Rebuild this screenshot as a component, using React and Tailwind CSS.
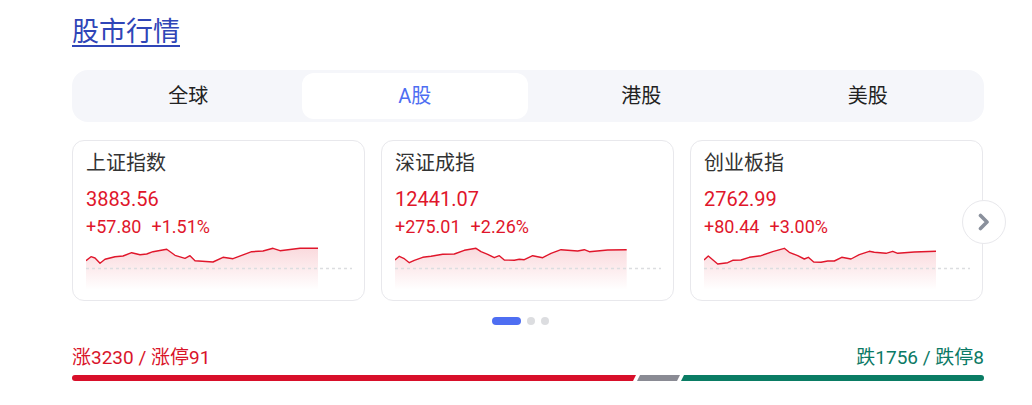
import { useState } from 'react';

const font = { fontFamily: 'Roboto, "Noto Sans CJK SC", sans-serif' };

const tabs = ['全球', 'A股', '港股', '美股'];

const indices = [
  {
    name: '上证指数',
    price: '3883.56',
    change: '+57.80',
    pct: '+1.51%',
    pts: [[0,15.7],[5,11.7],[9,13],[14,18.3],[19,14.3],[29,11.7],[37,11],[45.7,7.7],[54,9.7],[60.7,9],[67,6.7],[80.7,4.3],[89,10.3],[99,13.3],[104,10.7],[109,15.7],[127,17],[137,12.3],[147,13.7],[155.7,10.3],[165.7,6.7],[177,6],[187,3.3],[194,5.7],[214,3.3],[232,3.3]],
  },
  {
    name: '深证成指',
    price: '12441.07',
    change: '+275.01',
    pct: '+2.26%',
    pts: [[0,15],[4.3,11.3],[8.7,13.3],[14.3,17.7],[19.3,15.3],[27.7,12.3],[36,11.3],[47.7,9.3],[59.3,9],[69.3,5.3],[81,3.3],[86,6.7],[92.7,9.3],[99.3,12.7],[104.3,10.7],[109.3,15],[119.3,15.3],[124.3,14.3],[129.3,14.7],[137.7,10.7],[147.7,12.7],[156,8.3],[166,4.7],[182.7,6],[189.3,4.7],[194.3,6.7],[212.7,5],[231.7,4.7]],
  },
  {
    name: '创业板指',
    price: '2762.99',
    change: '+80.44',
    pct: '+3.00%',
    pts: [[0,15],[4.3,11],[13.7,19],[23.7,17.7],[28.7,15.3],[37,15],[45.3,12.3],[57,10.7],[68.7,6.7],[80.3,3.3],[85.3,7.3],[93.7,10.7],[100.3,14],[104.3,12.3],[109.7,17],[117,17.3],[123.7,16],[130.3,16],[137.7,12.3],[147,14],[155.3,9.7],[165.3,6.3],[170.3,7.3],[182,8.3],[188.7,6.3],[193.7,8.3],[210.3,7],[232,6.3]],
  },
];

function Sparkline({ pts, id }) {
  const line = pts.map((p, i) => `${i ? 'L' : 'M'}${p[0]},${p[1]}`).join(' ');
  const last = pts[pts.length - 1];
  const area = `${line} L${last[0]},45 L0,45 Z`;
  return (
    <svg width="266" height="45" viewBox="0 0 266 45" className="block">
      <defs>
        <linearGradient id={id} x1="0" y1="0" x2="0" y2="1">
          <stop offset="0" stopColor="#e0162b" stopOpacity="0.16" />
          <stop offset="1" stopColor="#e0162b" stopOpacity="0" />
        </linearGradient>
      </defs>
      <path d={area} fill={`url(#${id})`} />
      <line x1="0" y1="23.5" x2="266" y2="23.5" stroke="#dcdde0" strokeWidth="1.5" strokeDasharray="3 3" />
      <path d={line} fill="none" stroke="#e0162b" strokeWidth="1.4" strokeLinejoin="round" />
    </svg>
  );
}

export default function App() {
  const [active, setActive] = useState(1);

  return (
    <div className="bg-white min-h-screen" style={font}>
      <div className="ml-[72px] w-[912px] pt-[14px]">
        <a href="#" className="block w-fit text-[27px] leading-[36px] text-[#2f45b7] underline decoration-[1.5px] underline-offset-[4px]">
          股市行情
        </a>

        {/* tabs */}
        <div className="mt-[20px] h-[52px] p-[3px] rounded-[16px] bg-[#f5f6fa] flex">
          {tabs.map((t, i) => (
            <button
              key={t}
              onClick={() => setActive(i)}
              className={
                i === active
                  ? 'flex-1 rounded-[12px] bg-white text-[20px] text-[#4e6ef2]'
                  : 'flex-1 rounded-[12px] text-[20px] text-[#222]'
              }
            >
              {t}
            </button>
          ))}
        </div>

        {/* index cards */}
        <div className="relative mt-[18px] flex gap-[16px]">
          {indices.map((item, i) => (
            <div key={item.name} className="w-[293px] h-[161px] rounded-[12px] border border-[#e8e8ec] px-[13px] pt-[8px]">
              <div className="text-[20px] leading-[28px] text-[#333]">{item.name}</div>
              <div className="mt-[8px] text-[20px] leading-[28px] text-[#e0162b]">{item.price}</div>
              <div className="mt-[2px] text-[18px] leading-[24px] text-[#e0162b] flex gap-[10px]">
                <span>{item.change}</span>
                <span>{item.pct}</span>
              </div>
              <div className="mt-[6px]">
                <Sparkline pts={item.pts} id={`grad${i}`} />
              </div>
            </div>
          ))}
          <button className="absolute right-[-22px] top-[60px] w-[44px] h-[44px] rounded-full border border-[#e8e8ec] bg-white flex items-center justify-center">
            <svg width="12" height="18" viewBox="0 0 12 18">
              <polyline points="2.5,2.5 9,9 2.5,15.5" fill="none" stroke="#8a909c" strokeWidth="3.6" strokeLinecap="round" strokeLinejoin="round" />
            </svg>
          </button>
        </div>

        {/* pager dots */}
        <div className="mt-[16px] h-[8px] flex justify-center gap-[6px] pr-[16px]">
          <span className="w-[29px] h-[8px] rounded-full bg-[#4e6ef2]" />
          <span className="w-[8px] h-[8px] rounded-full bg-[#dcdde0]" />
          <span className="w-[8px] h-[8px] rounded-full bg-[#dcdde0]" />
        </div>

        {/* advance / decline */}
        <div className="mt-[21px] flex justify-between text-[19px] leading-[24px]">
          <span className="text-[#d9142a]">涨3230 / 涨停91</span>
          <span className="text-[#0b7a65]">跌1756 / 跌停8</span>
        </div>
        <div className="mt-[5px] h-[6px] flex">
          <div className="w-[564px] bg-[#d80f2a] rounded-l-full [clip-path:polygon(0_0,100%_0,calc(100%-3px)_100%,0_100%)]" />
          <div className="ml-[1px] w-[43px] bg-[#8a8b94] [clip-path:polygon(3px_0,100%_0,calc(100%-3px)_100%,0_100%)]" />
          <div className="ml-[1px] flex-1 bg-[#0a7c64] rounded-r-full [clip-path:polygon(3px_0,100%_0,100%_100%,0_100%)]" />
        </div>

        {/* next row (cut off by the window) */}
        <div className="mt-[25px] flex text-[16px] leading-[22px] text-[#333] gap-[40px] pl-[150px]">
          <span>沪深两市</span>
          <span className="text-[#2f45b7]">成交额</span>
          <span>北向资金</span>
          <span className="text-[#e0162b]">主力净流入</span>
          <span>融资余额</span>
        </div>
      </div>
    </div>
  );
}
